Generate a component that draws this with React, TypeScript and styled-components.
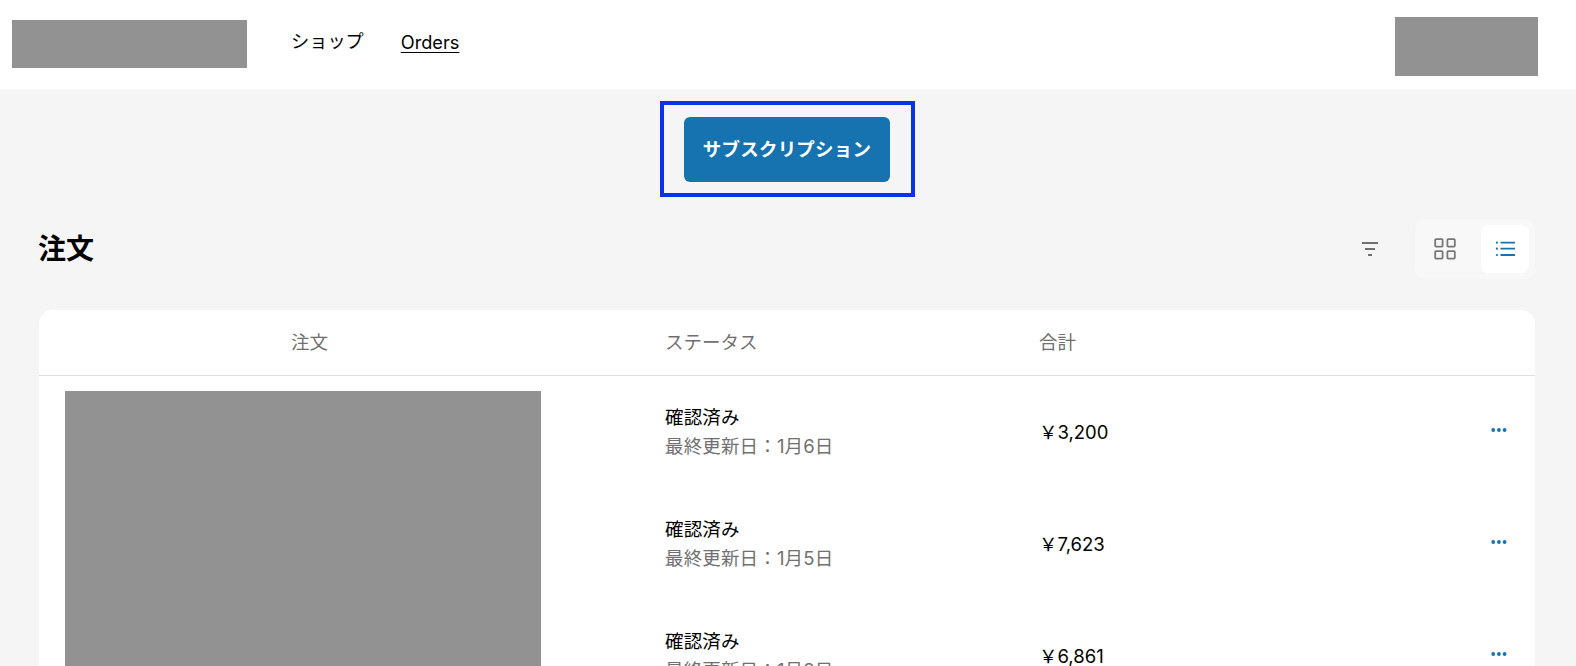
import React from "react";
import styled, { createGlobalStyle } from "styled-components";

const GlobalStyle = createGlobalStyle`
   html, body {
      margin: 0;
      height: 666px;
      overflow: hidden;
      background: #f5f5f5;
      color: #000;
      font-family: Inter, "Noto Sans CJK JP", sans-serif;
      font-size: 18.5px;
   }
`;

const Header = styled.header`
   display: flex;
   align-items: flex-start;
   height: 89px;
   box-sizing: border-box;
   padding: 17px 38px 0 12px;
   background: #fff;
`;

const Placeholder = styled.div`
   background: #929292;
`;

const Logo = styled(Placeholder)`
   width: 235px;
   height: 48px;
   margin-top: 3px;
`;

const Account = styled(Placeholder)`
   width: 143px;
   height: 59px;
   margin-left: auto;
`;

const Nav = styled.nav`
   display: flex;
   gap: 37px;
   margin: 10px 0 0 44px;
   font-size: 18.2px;
   line-height: 28px;
`;

const NavLink = styled.a<{ $active?: boolean }>`
   margin-top: ${(p) => (p.$active ? "1px" : "0")};
   color: #000;
   text-decoration: ${(p) => (p.$active ? "underline" : "none")};
   text-underline-offset: 3px;
   text-decoration-thickness: 1px;
`;

const Banner = styled.div`
   display: flex;
   justify-content: center;
   margin-top: 12px;
`;

const Outline = styled.div`
   box-sizing: border-box;
   margin-right: 1px;
   padding: 12px 21px 11px 20px;
   border: 4px solid #0a33e8;
`;

const SubscribeButton = styled.button`
   display: block;
   box-sizing: border-box;
   width: 206px;
   height: 65px;
   padding: 0 0 3px;
   border: 0;
   border-radius: 6px;
   background: #1773b0;
   color: #fff;
   font: 700 18.5px Inter, "Noto Sans CJK JP", sans-serif;
   letter-spacing: 0.2px;
`;

const Main = styled.main`
   padding: 22px 41px 0 39px;
`;

const Toolbar = styled.div`
   display: flex;
   align-items: center;
   height: 59px;
   margin-bottom: 32px;
`;

const Title = styled.h1`
   margin: 0 auto 0 -1px;
   padding-bottom: 3px;
   font-size: 28px;
   font-weight: 700;
`;

const FilterButton = styled.div`
   display: flex;
   align-items: center;
   justify-content: center;
   width: 48px;
   height: 48px;
   margin-right: 21px;
   padding-top: 2px;
   color: #707070;
`;

const ViewSwitch = styled.div`
   display: flex;
   gap: 12px;
   padding: 6px;
   border-radius: 10px;
   background: #f8f8f8;
`;

const ViewButton = styled.div<{ $active?: boolean }>`
   display: flex;
   align-items: center;
   justify-content: center;
   width: 48px;
   height: 48px;
   border-radius: 8px;
   background: ${(p) => (p.$active ? "#fff" : "transparent")};
   color: ${(p) => (p.$active ? "#1773b0" : "#777")};
`;

const Card = styled.section`
   border-radius: 14px 14px 0 0;
   background: #fff;
`;

const columns = "626px 374px 1fr 44px";

const HeadRow = styled.div`
   display: grid;
   grid-template-columns: ${columns};
   align-items: center;
   height: 62px;
   padding-bottom: 3px;
   border-bottom: 1px solid #dedede;
   color: #707070;
`;

const OrderHead = styled.div`
   width: 541px;
   text-align: center;
`;

const Body = styled.div`
   display: grid;
   grid-template-columns: ${columns};
   grid-auto-rows: 112px;
   align-items: center;
`;

const OrderImage = styled(Placeholder)`
   grid-row: 1 / span 3;
   align-self: start;
   width: 476px;
   height: 320px;
   margin: 15px 0 0 26px;
`;

const Status = styled.div`
   line-height: 29px;
   letter-spacing: 0.15px;
`;

const Updated = styled.div`
   color: #707070;
`;

const Total = styled.div`
   grid-column: 3;
   margin-bottom: 2px;
   font-size: 18.5px;
`;

const MoreButton = styled.div`
   display: flex;
   margin-bottom: 4px;
   color: #1773b0;
`;

const FilterIcon = () => (
   <svg width="20" height="20" viewBox="0 0 20 20" fill="none" stroke="currentColor" strokeWidth="1.8">
      <path d="M2 3h16M5 9h10M8 15h4" />
   </svg>
);

const GridIcon = () => (
   <svg width="24" height="24" viewBox="0 0 24 24" fill="none" stroke="currentColor" strokeWidth="1.8">
      <rect x="2.2" y="2.2" width="7.4" height="7.4" rx="0.8" />
      <rect x="14.4" y="2.2" width="7.4" height="7.4" rx="0.8" />
      <rect x="2.2" y="14.2" width="7.4" height="7.4" rx="0.8" />
      <rect x="14.4" y="14.2" width="7.4" height="7.4" rx="0.8" />
   </svg>
);

const ListIcon = () => (
   <svg width="24" height="24" viewBox="0 0 24 24" fill="none" stroke="currentColor" strokeWidth="1.8">
      <path d="M7.5 5.7h14.5M7.5 11.7h14.5M7.5 18h14.5" />
      <circle cx="3.9" cy="5.7" r="1.1" fill="currentColor" stroke="none" />
      <circle cx="3.9" cy="11.7" r="1.1" fill="currentColor" stroke="none" />
      <circle cx="3.9" cy="18" r="1.1" fill="currentColor" stroke="none" />
   </svg>
);

const DotsIcon = () => (
   <svg width="16" height="6" viewBox="0 0 16 6" fill="currentColor">
      <circle cx="2.2" cy="3" r="1.9" />
      <circle cx="7.9" cy="3" r="1.9" />
      <circle cx="13.6" cy="3" r="1.9" />
   </svg>
);

const orders = [
   { date: "1月6日", total: "￥3,200" },
   { date: "1月5日", total: "￥7,623" },
   { date: "1月3日", total: "￥6,861" },
];

const App: React.FC = () => {
   return (
      <>
         <GlobalStyle />
         <Header>
            <Logo />
            <Nav>
               <NavLink>ショップ</NavLink>
               <NavLink $active>Orders</NavLink>
            </Nav>
            <Account />
         </Header>
         <Banner>
            <Outline>
               <SubscribeButton>サブスクリプション</SubscribeButton>
            </Outline>
         </Banner>
         <Main>
            <Toolbar>
               <Title>注文</Title>
               <FilterButton>
                  <FilterIcon />
               </FilterButton>
               <ViewSwitch>
                  <ViewButton>
                     <GridIcon />
                  </ViewButton>
                  <ViewButton $active>
                     <ListIcon />
                  </ViewButton>
               </ViewSwitch>
            </Toolbar>
            <Card>
               <HeadRow>
                  <OrderHead>注文</OrderHead>
                  <div>ステータス</div>
                  <div>合計</div>
               </HeadRow>
               <Body>
                  <OrderImage />
                  {orders.map((order) => (
                     <React.Fragment key={order.date}>
                        <Status>
                           確認済み
                           <Updated>最終更新日：{order.date}</Updated>
                        </Status>
                        <Total>{order.total}</Total>
                        <MoreButton>
                           <DotsIcon />
                        </MoreButton>
                     </React.Fragment>
                  ))}
               </Body>
            </Card>
         </Main>
      </>
   );
};

export default App;
